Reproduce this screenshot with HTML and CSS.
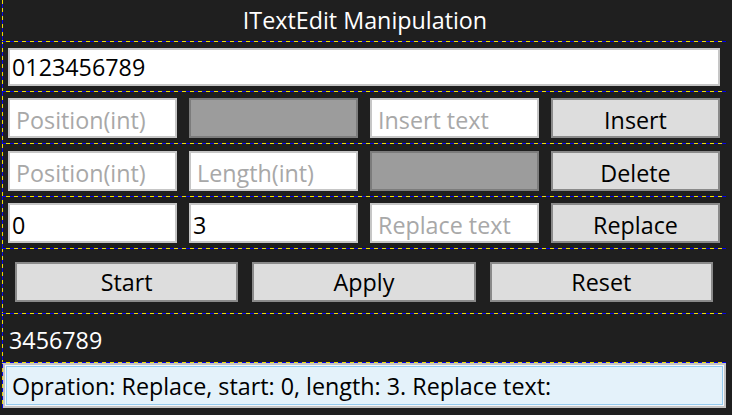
FILE: index.html
```html
<!DOCTYPE html>
<html>
<head>
<meta charset="utf-8">
<link rel="stylesheet" href="styles.css">
</head>
<body>
<div class="grid">
  <div class="title">ITextEdit Manipulation</div>
  <div class="row row-text">
    <div class="box input">0123456789</div>
  </div>
  <div class="row row-ctl">
    <div class="box input placeholder">Position(int)</div>
    <div class="box disabled"></div>
    <div class="box input placeholder">Insert text</div>
    <div class="box button">Insert</div>
  </div>
  <div class="row row-ctl row-shift">
    <div class="box input placeholder">Position(int)</div>
    <div class="box input placeholder">Length(int)</div>
    <div class="box disabled"></div>
    <div class="box button">Delete</div>
  </div>
  <div class="row row-ctl">
    <div class="box input">0</div>
    <div class="box input">3</div>
    <div class="box input placeholder">Replace text</div>
    <div class="box button">Replace</div>
  </div>
  <div class="row row-actions">
    <div class="box button">Start</div>
    <div class="box button">Apply</div>
    <div class="box button">Reset</div>
  </div>
  <div class="row row-result">3456789</div>
  <div class="row row-status">
    <div class="status">Opration: Replace, start: 0, length: 3. Replace text:</div>
  </div>
</div>
</body>
</html>
```

FILE: styles.css
```css
html, body {
  margin: 0;
  padding: 0;
  background: #1f1f1f;
  width: 732px;
  height: 415px;
  overflow: hidden;
}

body {
  font-family: "Open Sans", "Noto Sans", sans-serif;
  font-size: 23.3px;
  color: #000;
}

.grid {
  margin-left: 2px;
  width: 724px;
  height: 408px;
  background: repeating-linear-gradient(180deg, #f0e000 0 4px, #0000f0 4px 8px) left top / 1px 100% no-repeat;
}

.title {
  height: 41px;
  color: #fff;
  text-align: center;
  line-height: 40px;
  padding-left: 2px;
}

.row {
  box-sizing: border-box;
  background: repeating-linear-gradient(90deg, #0000f0 0 4px, #f0e000 4px 8px) left top / 100% 1px no-repeat;
}

.row-text {
  height: 50px;
  padding: 7px 6px 0 6px;
}

.row-text .box {
  height: 38px;
}

.row-ctl {
  height: 52px;
  padding: 7px 6px 0 6px;
  display: grid;
  grid-template-columns: repeat(4, 1fr);
  column-gap: 12px;
  align-items: start;
}

.row-ctl .box {
  padding-top: 3px;
}

.row-shift {
  height: 53px;
  padding-top: 8px;
}

.box {
  box-sizing: border-box;
  height: 40px;
  display: flex;
  align-items: center;
  white-space: nowrap;
  overflow: hidden;
}

.input {
  background: #fff;
  border: 2px solid #c6c6c6;
  padding-left: 2px;
}

.placeholder {
  color: #a8a8a8;
  padding-left: 6px;
}

.disabled {
  background: #9c9c9c;
  border: 2px solid #7c7c7c;
}

.button {
  background: #dddddd;
  border: 2px solid #8a8a8a;
  justify-content: center;
}

.row-actions {
  height: 65px;
  padding: 14px 13px 0 13px;
  display: grid;
  grid-template-columns: repeat(3, 1fr);
  column-gap: 14px;
  align-items: start;
}

.row-result {
  height: 49px;
  color: #fff;
  padding-left: 7px;
  display: flex;
  align-items: center;
  padding-top: 4px;
}

.row-status {
  height: 46px;
  padding: 1px 0 0 1px;
}

.status {
  box-sizing: border-box;
  height: 45px;
  width: 723px;
  background: #e4f2fa;
  border: 2px solid #c4c4c4;
  box-shadow: inset 0 0 0 1px #f4f8fb, inset 0 0 0 2px #96cbee;
  padding-left: 7px;
  display: flex;
  align-items: center;
  white-space: nowrap;
}
```
